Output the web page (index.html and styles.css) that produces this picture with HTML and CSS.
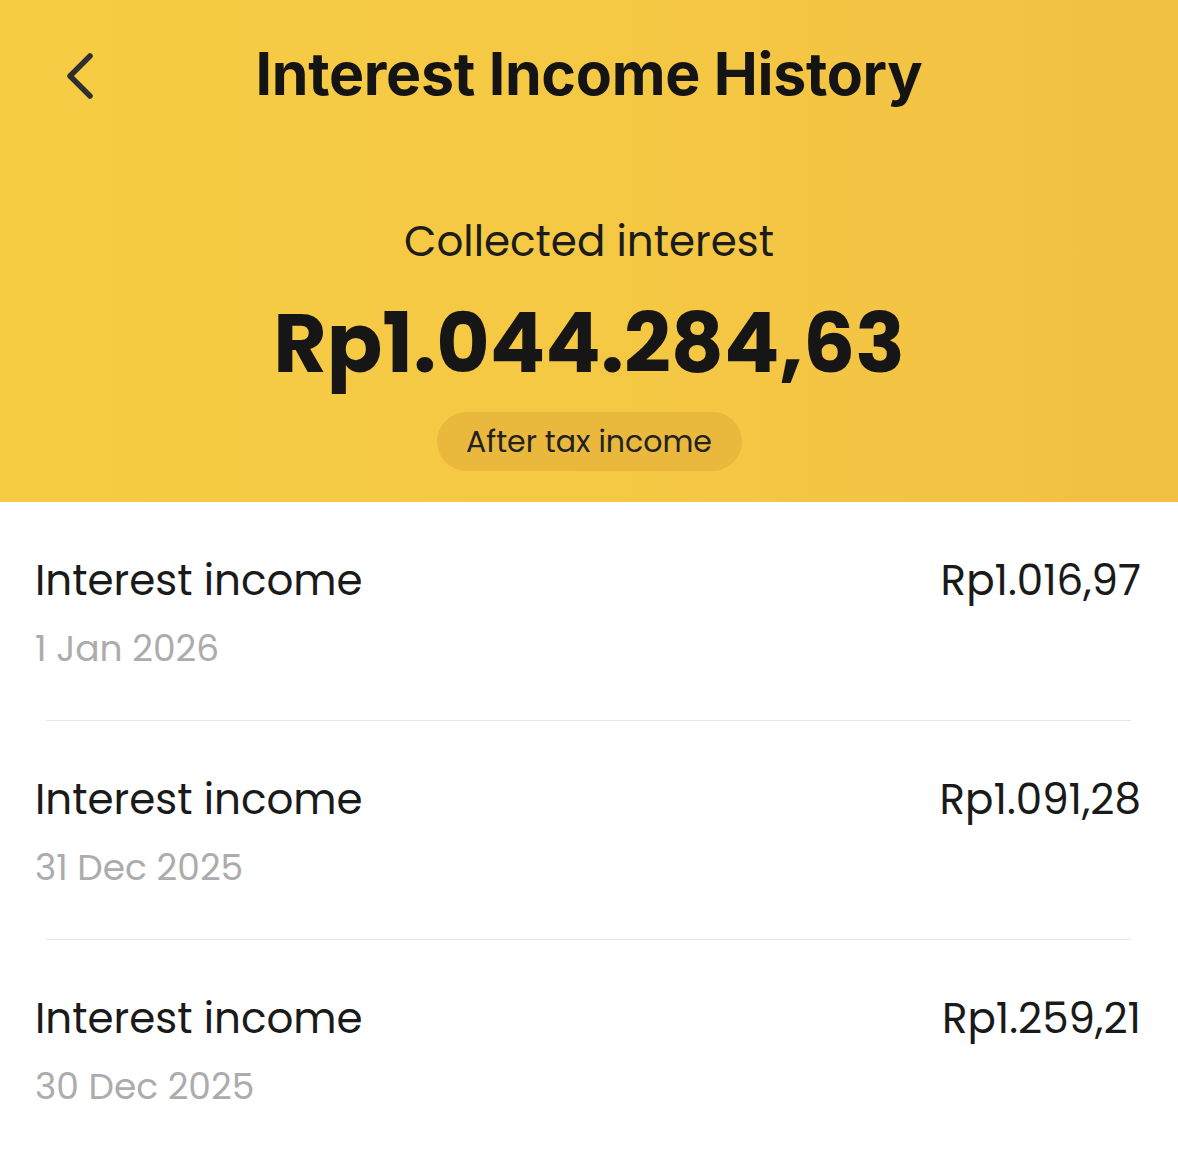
FILE: index.html
```html
<!DOCTYPE html>
<html>
<head>
<meta charset="utf-8">
<link rel="stylesheet" href="styles.css">
</head>
<body>
<header class="hero">
  <div class="topbar">
    <button class="back" aria-label="Back">
      <svg width="40" height="56" viewBox="0 0 40 56"><path d="M28 7 L8 27 L28 47" fill="none" stroke="#2e2e2e" stroke-width="5.5" stroke-linecap="round" stroke-linejoin="round"/></svg>
    </button>
    <h1 class="title">Interest Income History</h1>
    <div></div>
  </div>
  <div class="summary">
    <div class="label">Collected interest</div>
    <div class="total">Rp1.044.284,63</div>
    <div class="pill">After tax income</div>
  </div>
</header>
<main class="list">
  <div class="row">
    <div class="left">
      <div class="name">Interest income</div>
      <div class="date">1 Jan 2026</div>
    </div>
    <div class="amount">Rp1.016,97</div>
  </div>
  <div class="divider"></div>
  <div class="row">
    <div class="left">
      <div class="name">Interest income</div>
      <div class="date">31 Dec 2025</div>
    </div>
    <div class="amount">Rp1.091,28</div>
  </div>
  <div class="divider"></div>
  <div class="row">
    <div class="left">
      <div class="name">Interest income</div>
      <div class="date">30 Dec 2025</div>
    </div>
    <div class="amount">Rp1.259,21</div>
  </div>
</main>
</body>
</html>
```
FILE: styles.css
```css
* { box-sizing: border-box; }
html, body { margin: 0; padding: 0; background: #fff; }
body {
  width: 1178px;
  font-family: "Poppins", "Lato", "Open Sans", sans-serif;
  color: #1a1a1a;
}
.hero {
  height: 502px;
  background: linear-gradient(90deg, #f6cc44 0%, #f5c844 55%, #f2c043 100%);
  display: flex;
  flex-direction: column;
}
.topbar {
  display: grid;
  grid-template-columns: 1fr auto 1fr;
  align-items: start;
  height: 150px;
  padding-top: 44px;
}
.back {
  margin-left: 62px;
  margin-top: 5px;
  background: none;
  border: 0;
  padding: 0;
  width: 40px;
  height: 56px;
  display: flex;
}
.title {
  margin: 0;
  font-family: "Inter", "Liberation Sans", sans-serif;
  font-weight: 700;
  font-size: 59px;
  letter-spacing: -0.3px;
  color: #141414;
  line-height: 1;
}
.summary {
  display: flex;
  flex-direction: column;
  align-items: center;
}
.label {
  margin-top: 66px;
  font-size: 42px;
  line-height: 52px;
  color: #1c1c1c;
}
.total {
  margin-top: 26px;
  font-size: 82px;
  font-weight: 700;
  line-height: 100px;
  color: #161616;
}
.pill {
  margin-top: 18px;
  width: 305px;
  height: 59px;
  border-radius: 30px;
  background: #e9b83d;
  display: flex;
  align-items: center;
  justify-content: center;
  font-size: 30px;
  color: #222;
}
.list {
  display: flex;
  flex-direction: column;
}
.row {
  display: flex;
  justify-content: space-between;
  align-items: flex-start;
  padding: 51px 37px 0 35px;
  height: 218px;
}
.name {
  font-size: 42px;
  line-height: 56px;
  color: #1a1a1a;
}
.date {
  margin-top: 18px;
  font-size: 36px;
  line-height: 44px;
  color: #acacac;
}
.amount {
  font-size: 42px;
  line-height: 56px;
  color: #1a1a1a;
}
.divider {
  height: 1px;
  background: #e6e6e6;
  margin: 0 47px 0 46px;
}
```
